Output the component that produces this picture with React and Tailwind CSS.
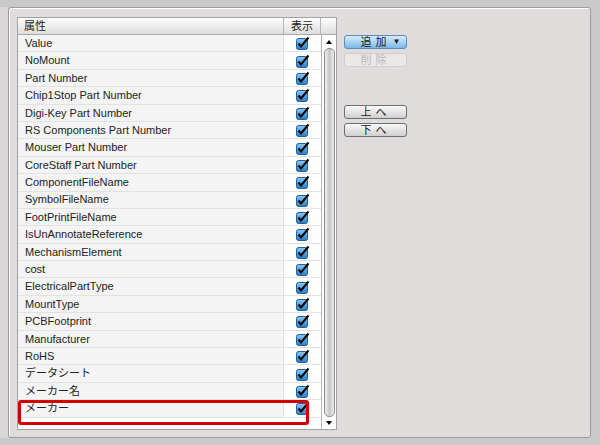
import React from "react";

const rows = [
  "Value",
  "NoMount",
  "Part Number",
  "Chip1Stop Part Number",
  "Digi-Key Part Number",
  "RS Components Part Number",
  "Mouser Part Number",
  "CoreStaff Part Number",
  "ComponentFileName",
  "SymbolFileName",
  "FootPrintFileName",
  "IsUnAnnotateReference",
  "MechanismElement",
  "cost",
  "ElectricalPartType",
  "MountType",
  "PCBFootprint",
  "Manufacturer",
  "RoHS",
  "データシート",
  "メーカー名",
  "メーカー",
];

function Check() {
  return (
    <svg width="14" height="14" viewBox="0 0 14 14">
      <defs>
        <linearGradient id="cb" x1="0" y1="0" x2="0" y2="1">
          <stop offset="0" stopColor="#8cc8f0" />
          <stop offset="1" stopColor="#2a7cc4" />
        </linearGradient>
      </defs>
      <rect x="0.5" y="2.5" width="11" height="11" rx="2" fill="url(#cb)" stroke="#1f5f9a" />
      <path d="M2.5 7.5 L5 10.5 L12.5 1.5" fill="none" stroke="#000" strokeWidth="2" />
    </svg>
  );
}

function Btn({ children, kind }) {
  const styles = {
    blue: "border-[#5a8cbc] bg-gradient-to-b from-[#d6ecfb] to-[#7ab8e8] text-[#1a1a1a]",
    off: "border-[#cfcfcf] bg-[#ebe8e8] text-[#b9b9b9]",
    gray: "border-[#6e6e6e] bg-gradient-to-b from-[#fafafa] to-[#cfcfcf] text-[#1a1a1a]",
  };
  return (
    <div
      className={`flex h-[14px] w-[63px] items-center justify-center rounded-[3px] border text-[11px] leading-none ${styles[kind]}`}
    >
      {children}
    </div>
  );
}

export default function App() {
  return (
    <div
      className="h-[445px] w-[600px] bg-[#c9c9c9] pt-[7px]"
      style={{ fontFamily: '"Liberation Sans", "Noto Sans CJK JP", sans-serif' }}
    >
      <div className="flex h-[431px]">
        <div className="w-[8px] bg-[#d9d7d7]" />
        <div className="flex h-[431px] w-[583px] gap-[7px] rounded-[3px] border border-[#9c9c9c] bg-[#e0dcdc] pl-[8px] pt-[9px] shadow-[inset_1px_1px_0_#fff]">
          <div className="flex h-[413px] w-[320px] flex-col border border-[#a3a3a3] bg-white">
            <div className="flex h-[17px] border-b border-[#a8a8a8] bg-gradient-to-b from-[#fdfdfd] to-[#dedede] text-[11px] text-[#222]">
              <div className="flex w-[266px] items-center border-r border-[#b5b5b5] pl-[6px]">属性</div>
              <div className="flex w-[37px] items-center justify-center border-r border-[#b5b5b5]">表示</div>
              <div className="flex-1" />
            </div>
            <div className="flex flex-1">
              <div className="relative w-[303px]">
                {rows.map((r) => (
                  <div key={r} className="flex h-[17.4px] border-b border-[#e2e2e2] text-[11px] text-[#222]">
                    <div className="flex w-[266px] items-center border-r border-[#e2e2e2] bg-[#f4f4f4] pl-[7px]">
                      {r}
                    </div>
                    <div className="flex flex-1 items-center justify-center pl-[1px]">
                      <Check />
                    </div>
                  </div>
                ))}
                <div className="absolute left-[0px] top-[365px] h-[25px] w-[291px] rounded-[3px] border-[3px] border-[#d40000]" />
              </div>
              <div className="flex w-[15px] flex-col items-center border-l border-[#b5b5b5] bg-white">
                <div className="mt-[5px] h-0 w-0 border-x-[3px] border-b-[4px] border-x-transparent border-b-black" />
                <div className="mt-[4px] w-[11px] flex-1 rounded-[5px] border border-[#8e8e8e] bg-gradient-to-r from-[#f2f2f2] via-[#c6c6c6] to-[#efefef]" />
                <div className="mb-[4px] mt-[4px] h-0 w-0 border-x-[3px] border-t-[4px] border-x-transparent border-t-black" />
              </div>
            </div>
          </div>
          <div className="flex flex-col pt-[18px]">
            <Btn kind="blue">
              <span className="ml-[10px] tracking-[4px]">追加</span>
              <span className="ml-[2px] text-[8px]">▼</span>
            </Btn>
            <div className="mt-[4px]">
              <Btn kind="off">
                <span className="tracking-[4px]">削除</span>
              </Btn>
            </div>
            <div className="mt-[38px]">
              <Btn kind="gray">
                <span className="tracking-[4px]">上へ</span>
              </Btn>
            </div>
            <div className="mt-[4px]">
              <Btn kind="gray">
                <span className="tracking-[4px]">下へ</span>
              </Btn>
            </div>
          </div>
        </div>
      </div>
    </div>
  );
}
